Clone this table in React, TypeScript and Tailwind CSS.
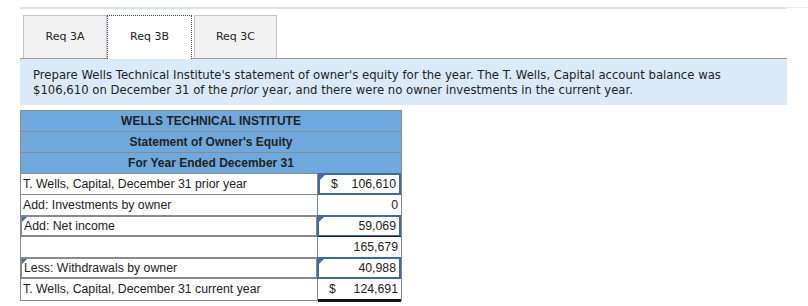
import React from "react";

const Tri = () => (
  <span className="absolute left-0 top-0 h-0 w-0 border-l-[5px] border-b-[5px] border-l-[#3d6fb4] border-b-transparent" />
);

type Row = {
  label: string;
  value: string;
  dollar?: boolean;
  labelInput?: boolean;
  valueInput?: boolean;
  total?: boolean;
  final?: boolean;
};

const rows: Row[] = [
  { label: "T. Wells, Capital, December 31 prior year", value: "106,610", dollar: true, valueInput: true },
  { label: "Add: Investments by owner", value: "0" },
  { label: "Add: Net income", value: "59,069", labelInput: true, valueInput: true },
  { label: "", value: "165,679", total: true },
  { label: "Less: Withdrawals by owner", value: "40,988", labelInput: true, valueInput: true },
  { label: "T. Wells, Capital, December 31 current year", value: "124,691", dollar: true, final: true },
];

export default function App() {
  return (
    <div className="w-[808px] h-[306px] bg-white pt-[7px] font-['DejaVu_Sans',sans-serif]">
      <div className="flex">
        <div className="ml-[20px] w-[767px] h-[2px] bg-[#e2e2e2]" />
        <div className="flex-1 h-px bg-[#ececec]" />
      </div>
      <div className="ml-[20px] w-[767px]">
        <div className="flex items-end mt-[7px] pl-[3px] h-[43px] border-b border-[#9a9a9a]">
          <div className="w-[84px] h-[43px] flex items-center justify-center bg-[#f2f2f2] border border-b-0 border-[#c4c4c4] text-[11px] text-[#222]">
            Req 3A
          </div>
          <div className="w-[85px] h-[44px] -mb-px flex items-center justify-center bg-white border border-b-0 border-dotted border-[#2f4f8f] text-[11px] text-[#222]">
            Req 3B
          </div>
          <div className="ml-[2px] w-[83px] h-[43px] flex items-center justify-center bg-[#f2f2f2] border border-b-0 border-[#c4c4c4] text-[11px] text-[#222]">
            Req 3C
          </div>
        </div>
        <div className="bg-[#dbeaf8] h-[46px] pl-[13px] pt-[9px] text-[11.66px] leading-[15px] text-[#222]">
          Prepare Wells Technical Institute's statement of owner's equity for the year. The T. Wells, Capital account balance was
          <br />
          $106,610 on December 31 of the <i>prior</i> year, and there were no owner investments in the current year.
        </div>
      </div>
      <div className="ml-[20px] mt-[5px] w-[382px] border border-[#8a8a8a] font-['Liberation_Sans',Arial,sans-serif] text-[12px] text-[#222]">
        {["WELLS TECHNICAL INSTITUTE", "Statement of Owner's Equity", "For Year Ended December 31"].map((h) => (
          <div
            key={h}
            className="h-[21px] flex items-center justify-center bg-[#6fa8dc] border-b border-[#8a8a8a] font-bold"
          >
            {h}
          </div>
        ))}
        {rows.map((r, i) => (
          <div key={i} className={`flex h-[21px] text-[12.3px] ${i < rows.length - 1 ? "border-b border-[#8a8a8a]" : ""}`}>
            <div
              className={`relative w-[297px] flex items-center pl-[2px] border-r border-[#8a8a8a] ${
                r.labelInput ? "border-2 border-[#3d6aa3] -my-px -ml-px" : ""
              }`}
            >
              {r.labelInput && <Tri />}
              {r.label}
            </div>
            <div
              className={`relative flex-1 flex items-center justify-between pr-[3px] pl-[11px] ${
                r.valueInput ? "border-2 border-[#3d6aa3] -my-px" : ""
              } ${r.total ? "border-t border-t-[#222] -mt-px" : ""} ${
                r.final ? "border-b-[3px] border-b-[#111] -mb-[2px]" : ""
              }`}
            >
              {r.valueInput && <Tri />}
              <span>{r.dollar ? "$" : ""}</span>
              <span>{r.value}</span>
            </div>
          </div>
        ))}
      </div>
    </div>
  );
}
